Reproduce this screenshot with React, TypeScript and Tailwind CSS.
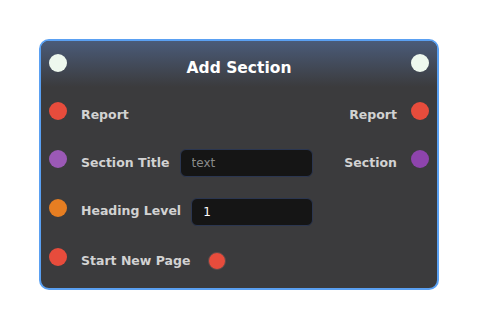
const font = { fontFamily: '"DejaVu Sans", Verdana, sans-serif' };

function Dot({ color, up = true }: { color: string; up?: boolean }) {
  return <span className={`block w-[18px] h-[18px] rounded-full shrink-0 ${up ? "mb-2" : "-mt-[2px]"} ${color}`} />;
}

export default function App() {
  return (
    <div className="w-[477px] h-[329px] bg-white pt-[39px] pl-[39px]" style={font}>
      <div className="w-[400px] h-[251px] rounded-[10px] border-2 border-[#5aa0f2] bg-[#3b3b3d] overflow-hidden">
        {/* header */}
        <div className="h-[46px] flex items-center justify-between px-2 bg-gradient-to-b from-[#4a5b79] to-[#3b3b3d]">
          <Dot color="bg-[#eef8ee]" up={false} />
          <h1 className="text-[15.5px] font-bold text-white mt-[10px]">Add Section</h1>
          <Dot color="bg-[#eef8ee]" up={false} />
        </div>

        <div className="pt-1 text-[12.5px] font-bold text-[#d2d2d2]">
          {/* Report */}
          <div className="h-[48px] grid grid-cols-[minmax(0,1fr)_124px] items-center">
            <div className="flex items-center gap-[14px] pl-2">
              <Dot color="bg-[#e74c3c]" />
              <span>Report</span>
            </div>
            <div className="flex items-center justify-end gap-[14px] pr-2">
              <span>Report</span>
              <Dot color="bg-[#e74c3c]" />
            </div>
          </div>

          {/* Section Title */}
          <div className="h-[48px] grid grid-cols-[minmax(0,1fr)_124px] items-center">
            <div className="flex items-center gap-[14px] pl-2">
              <Dot color="bg-[#9b59b6]" />
              <span className="whitespace-nowrap">Section Title</span>
              <input
                placeholder="text"
                className="flex-1 w-0 min-w-0 -ml-1 h-[28px] rounded-[6px] bg-[#151515] border border-[#2b3650] pl-[11px] text-[12px] font-normal text-white placeholder:text-[#8a8a8a] outline-none"
              />
            </div>
            <div className="flex items-center justify-end gap-[14px] pr-2">
              <span>Section</span>
              <Dot color="bg-[#8e44ad]" />
            </div>
          </div>

          {/* Heading Level */}
          <div className="h-[49px] grid grid-cols-[minmax(0,1fr)_124px] items-center">
            <div className="flex items-center gap-[14px] pl-2">
              <Dot color="bg-[#e67e22]" />
              <span className="whitespace-nowrap">Heading Level</span>
              <input
                defaultValue="1"
                className="flex-1 w-0 min-w-0 -ml-1 h-[28px] rounded-[6px] bg-[#151515] border border-[#2b3650] pl-[11px] text-[12px] font-normal text-white outline-none"
              />
            </div>
            <div />
          </div>

          {/* Start New Page */}
          <div className="h-[50px] grid grid-cols-[minmax(0,1fr)_124px] items-center">
            <div className="flex items-center gap-[14px] pl-2">
              <Dot color="bg-[#e74c3c]" />
              <span className="whitespace-nowrap">Start New Page</span>
              <span className="ml-1 block w-[18px] h-[18px] rounded-full bg-[#e74c3c] border border-[#5a4a4a]" />
            </div>
            <div />
          </div>
        </div>
      </div>
    </div>
  );
}
